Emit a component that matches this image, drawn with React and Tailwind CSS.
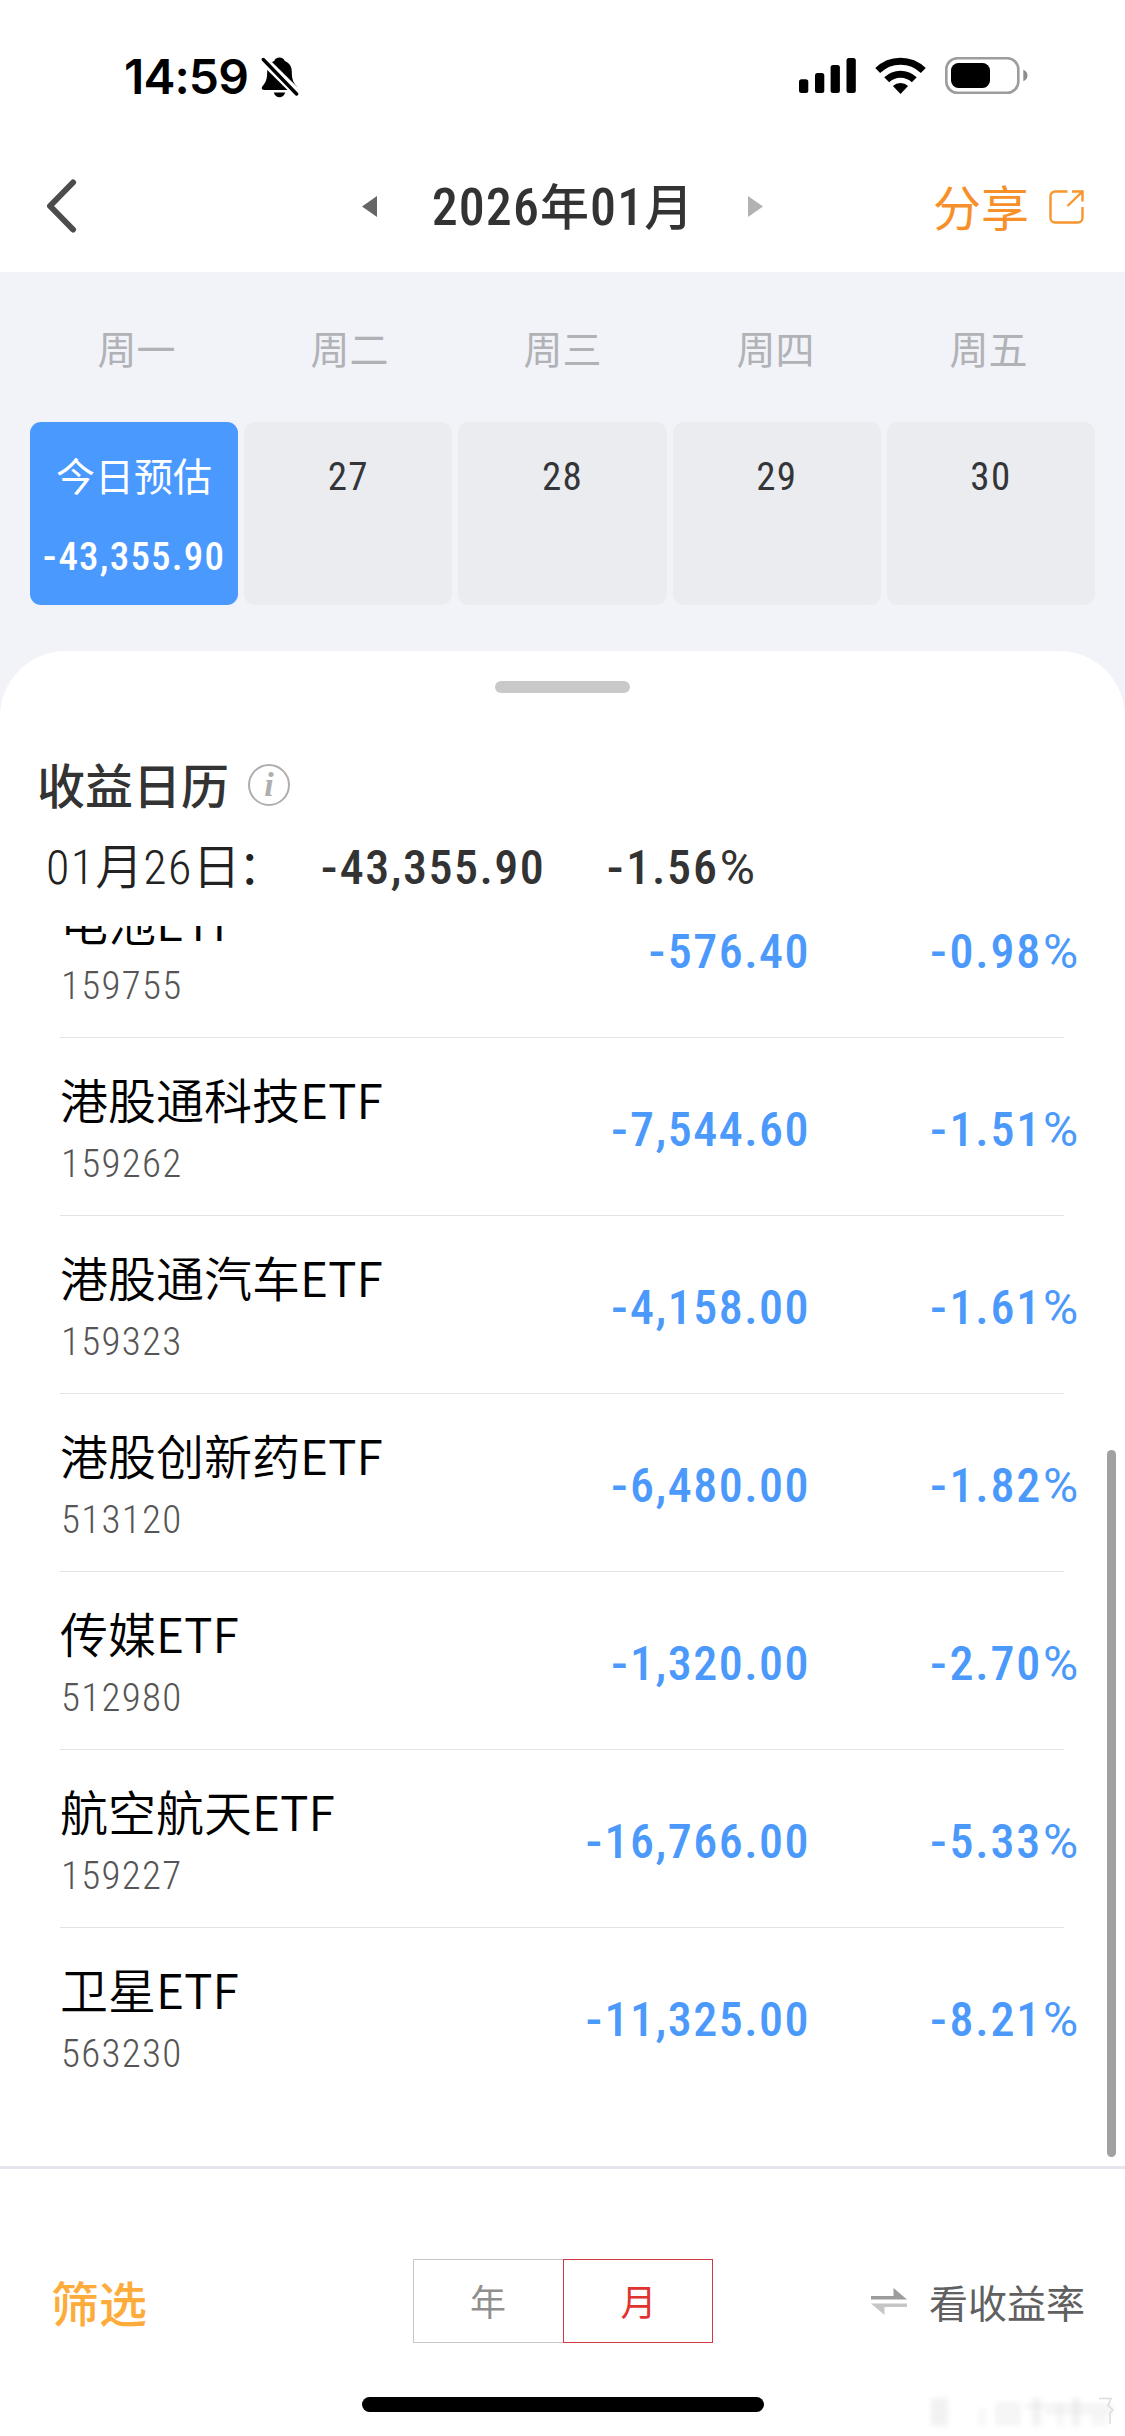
const weekdays = ["周一", "周二", "周三", "周四", "周五"];
const days = ["27", "28", "29", "30"];

const holdings = [
  { name: "电池ETF", code: "159755", amount: "-576.40", rate: "-0.98%" },
  { name: "港股通科技ETF", code: "159262", amount: "-7,544.60", rate: "-1.51%" },
  { name: "港股通汽车ETF", code: "159323", amount: "-4,158.00", rate: "-1.61%" },
  { name: "港股创新药ETF", code: "513120", amount: "-6,480.00", rate: "-1.82%" },
  { name: "传媒ETF", code: "512980", amount: "-1,320.00", rate: "-2.70%" },
  { name: "航空航天ETF", code: "159227", amount: "-16,766.00", rate: "-5.33%" },
  { name: "卫星ETF", code: "563230", amount: "-11,325.00", rate: "-8.21%" },
];

function BellOffIcon() {
  return (
    <svg className="h-[42px] w-[38px]" viewBox="0 0 38 42">
      <path
        d="M18.5 1.5c2.6 0 4.6 1.4 5.3 3.4 4.400 1.700 7 5.400 7 10.600 0 7.500 1.300 10.700 4.400 14.200 1.900 2.200 1.100 4.300-1.300 4.300H3.200c-2.500 0-3.300-2.200-1.400-4.300C4.900 26.200 6.200 23 6.200 15.500c0-5.200 2.600-8.900 7-10.600.7-2 2.700-3.400 5.300-3.400z"
        fill="#000"
      />
      <path d="M12.800 36.500h11.400c-.8 3-3 4.700-5.700 4.700s-4.900-1.700-5.700-4.700z" fill="#000" />
      <path d="M1 2.500L37 38" stroke="#fff" strokeWidth="9" />
      <path d="M2.300 3.500L35.600 38" stroke="#000" strokeWidth="3.400" strokeLinecap="round" />
    </svg>
  );
}

function SignalIcon() {
  return (
    <svg className="h-[35px] w-[57px]" viewBox="0 0 57 35">
      <rect x="0" y="21.300" width="9.300" height="13.700" rx="2.500" />
      <rect x="16" y="15" width="9.300" height="20" rx="2.500" />
      <rect x="31.600" y="7" width="9.300" height="28" rx="2.500" />
      <rect x="47.500" y="0" width="9.300" height="35" rx="2.500" />
    </svg>
  );
}

function WifiIcon() {
  return (
    <svg className="h-[37px] w-[51px]" viewBox="0 0 51 37">
      <g fill="none" stroke="#000" strokeWidth="7">
        <path d="M2.700 13.600a32.500 32.500 0 0 1 45.600 0" />
        <path d="M11.700 22.800a19.700 19.700 0 0 1 27.600 0" />
      </g>
      <path d="M25.500 37l-7.600-7.900a11 11 0 0 1 15.200 0z" />
    </svg>
  );
}

function BatteryIcon() {
  return (
    <svg className="h-[37px] w-[83px]" viewBox="0 0 83 37">
      <rect x="1.300" y="1.300" width="72" height="34.400" rx="11" fill="none" stroke="#9d9d9d" strokeWidth="2.600" />
      <rect x="6" y="6" width="39" height="25" rx="7.500" />
      <path d="M78.300 12.800c2.600.9 4.200 3 4.200 5.700s-1.600 4.800-4.200 5.700z" fill="#8d8d8d" />
    </svg>
  );
}

function ShareIcon() {
  return (
    <svg className="h-[34px] w-[35px]" viewBox="0 0 35 34" fill="none" stroke="#f7952f" strokeWidth="2.400">
      <path d="M18.500 1.500H6a4.500 4.500 0 0 0-4.500 4.500v22a4.500 4.500 0 0 0 4.500 4.500h23a4.500 4.500 0 0 0 4.500-4.500V17" />
      <path d="M23 1.500h10.500V11.500M33 2L18.500 16" />
    </svg>
  );
}

function InfoIcon() {
  return (
    <span className="flex size-[42px] items-center justify-center rounded-full border-[2.500px] border-[#aeaeae] pb-[1px] font-['Liberation_Serif',serif] text-[34px] leading-none font-bold text-[#aeaeae] italic">
      i
    </span>
  );
}

function SwapIcon() {
  return (
    <svg className="h-[27px] w-[36px]" viewBox="0 0 36 27">
      <path d="M0 8h22.500V0L36 11.500H0z" fill="#9c9c9c" />
      <path d="M36 19H13.500v8L0 15.500h36z" fill="#c6c6c6" />
    </svg>
  );
}

/* Signed figure: a wide minus, evenly tracked digits and a full-width percent sign. */
function Figure({ value }) {
  const percent = value.endsWith("%");
  const digits = value.slice(1, percent ? -1 : undefined);
  return (
    <span className="font-medium whitespace-nowrap">
      <span className="mr-[1px] [font-stretch:100%]">-</span>
      {digits}
      {percent && <span className="ml-[1px] font-normal [font-stretch:100%]">%</span>}
    </span>
  );
}

function StatusBar() {
  return (
    <div className="flex h-[144px] items-center justify-between bg-white pt-[9px] pr-[97px] pl-[124px]">
      <div className="flex items-center gap-[13px]">
        <span className="font-['Inter',sans-serif] text-[48px] leading-[60px] font-semibold tracking-[-0.900px] text-black">14:59</span>
        <BellOffIcon />
      </div>
      <div className="-mt-[3px] flex items-center">
        <SignalIcon />
        <span className="ml-[19px] flex"><WifiIcon /></span>
        <span className="ml-[19px] flex"><BatteryIcon /></span>
      </div>
    </div>
  );
}

function NavBar() {
  return (
    <div className="grid h-[128px] grid-cols-[362px_15px_371px_15px_362px] items-center bg-white">
      <svg className="-mt-[4px] ml-[46px] h-[54px] w-[31px]" viewBox="0 0 31 54" fill="none">
        <path d="M27 3.500L4 27l23 23.500" stroke="#4c4c4c" strokeWidth="6" strokeLinecap="round" strokeLinejoin="round" />
      </svg>
      <svg className="-mt-[4px] h-[21px] w-[15px]" viewBox="0 0 15 21"><path d="M15 0v21L0 10.500z" fill="#666" /></svg>
      <h1 className="text-center text-[52px] leading-[60px] font-medium text-[#333]">
        <span className="tracking-[1.100px]">2026</span>
        <span className="text-[49px]">年</span>
        <span className="ml-[1px] tracking-[1.100px]">01</span>
        <span className="text-[49px]">月</span>
      </h1>
      <svg className="-mt-[4px] h-[21px] w-[15px]" viewBox="0 0 15 21"><path d="M0 0v21l15-10.500z" fill="#b2b2b2" /></svg>
      <div className="flex items-center justify-end pr-[41px]">
        <span className="mt-[4px] text-[48px] leading-[60px] text-[#f7902a]">分享</span>
        <span className="-mt-[3px] ml-[20px] flex"><ShareIcon /></span>
      </div>
    </div>
  );
}

function Calendar() {
  return (
    <div className="mx-[30px] h-[379px]">
      <div className="grid h-[150px] grid-cols-5 items-center pt-[8px] text-center text-[39px] leading-[54px] text-[#b0b2b6]">
        {weekdays.map((d) => (
          <span key={d}>{d}</span>
        ))}
      </div>
      <div className="grid h-[183px] grid-cols-5 gap-[6px] text-center text-[39px] leading-[54px]">
        <div className="rounded-[11px] bg-[#4a99ff] pt-[29px] text-white">
          <div>今日预估</div>
          <div className="mt-[25px] tracking-[1.200px]">
            <Figure value="-43,355.90" />
          </div>
        </div>
        {days.map((d) => (
          <div key={d} className="rounded-[11px] bg-[#ebecef] pt-[28px] tracking-[1.300px] text-[#333538]">{d}</div>
        ))}
      </div>
    </div>
  );
}

function HoldingRow({ name, code, amount, rate }) {
  return (
    <div className="ml-[60px] grid h-[178px] w-[1004px] grid-cols-[388px_362px_270px] border-b border-[#e4e4e4] last:border-transparent">
      <div className="pt-[30px]">
        <div className="font-['Noto_Sans_CJK_SC',sans-serif] text-[48px] leading-[60px] font-[350] whitespace-nowrap text-black">{name}</div>
        <div className="mt-[11px] ml-[1px] text-[39px] leading-[50px] font-light tracking-[1.300px] text-[#555]">{code}</div>
      </div>
      <div className="self-center justify-self-end pt-[6px] text-[48px] leading-[60px] tracking-[1.500px] text-[#4c99fc]"><Figure value={amount} /></div>
      <div className="self-center justify-self-end pt-[6px] text-[48px] leading-[60px] tracking-[1.800px] text-[#4c99fc]"><Figure value={rate} /></div>
    </div>
  );
}

function ProfitSheet() {
  return (
    <section className="flex flex-1 flex-col rounded-t-[66px] bg-white pt-[30px]">
      <div className="mx-auto h-[12px] w-[135px] rounded-full bg-[#c9c9c9]" />
      <div className="mt-[65px] flex h-[60px] items-center pl-[37px]">
        <h2 className="text-[48px] leading-[60px] font-medium text-[#333]">收益日历</h2>
        <span className="-mt-[6px] ml-[19px]"><InfoIcon /></span>
      </div>
      <div className="mt-[20px] flex h-[60px] text-[48px] leading-[60px] text-[#333]">
        <div className="ml-[46px] w-[275px] font-[350] text-[#222]">
          <span className="tracking-[1.300px]">01</span>月
          <span className="tracking-[1.300px]">26</span>日<span className="-ml-[3px]">：</span>
        </div>
        <div className="w-[286px] tracking-[1.500px]"><Figure value="-43,355.90" /></div>
        <div className="tracking-[1.800px]"><Figure value="-1.56%" /></div>
      </div>
      <div className="relative mt-[28px] h-[1240px] overflow-hidden">
        <div className="-mt-[66px]">
          {holdings.map((h) => (
            <HoldingRow key={h.code} {...h} />
          ))}
        </div>
        <div className="absolute top-[524px] right-[9px] h-[707px] w-[9px] rounded-full bg-[#a1a1a1]" />
      </div>
      <Footer />
    </section>
  );
}

/* Faint smudged mark in the bottom right corner. */
function Smudge() {
  return (
    <svg className="absolute right-0 bottom-0 h-[66px] w-[210px]" viewBox="0 0 210 66">
      <defs>
        <filter id="soft" x="-20%" y="-20%" width="140%" height="140%">
          <feGaussianBlur stdDeviation="2.500" />
        </filter>
      </defs>
      <g filter="url(#soft)">
        <rect x="16" y="28" width="17" height="28" fill="#f2f2f2" />
        <rect x="63" y="38" width="8" height="18" fill="#f8f8f8" />
        <rect x="80" y="32" width="26" height="24" fill="#f6f6f6" />
        <rect x="117" y="28" width="9" height="28" fill="#f2f2f2" />
        <rect x="141" y="32" width="8" height="24" fill="#f7f7f7" />
        <rect x="157" y="28" width="8" height="28" fill="#f1f1f1" />
        <rect x="176" y="44" width="16" height="12" fill="#f7f7f7" />
        <path d="M110 36h88M130 42h68" stroke="#e4e4e4" strokeWidth="2" />
      </g>
      <path d="M184 28.500h12l-3 7 5 4.500-3 3v11" fill="none" stroke="#dcdcdc" strokeWidth="1.500" />
    </svg>
  );
}

function Footer() {
  return (
    <footer className="relative h-[270px] border-t-[3px] border-[#e5e5ee] bg-white pt-[90px]">
      <div className="grid h-[84px] grid-cols-[1fr_300px_1fr] items-center px-[40px]">
        <button className="mt-[10px] ml-[11px] justify-self-start text-[48px] leading-[60px] font-medium text-[#fdab3b]">筛选</button>
        <div className="grid h-[84px] grid-cols-2 text-center text-[36px] leading-[76px]">
          <div className="border border-r-0 border-[#c6c6c6] pt-[6px] text-[#8f8f8f]">年</div>
          <div className="border border-[#cf3a44] pt-[6px] pl-[2px] text-[#e0332f]">月</div>
        </div>
        <div className="flex items-center justify-self-end text-[39px] leading-[54px] text-[#606060]">
          <span className="mr-[22px] flex"><SwapIcon /></span>
          <span className="mt-[7px]">看收益率</span>
        </div>
      </div>
      <div className="mx-auto mt-[54px] h-[15px] w-[402px] rounded-full bg-black" />
      <Smudge />
    </footer>
  );
}

export default function App() {
  return (
    <main className="flex h-[2436px] w-[1125px] flex-col overflow-hidden bg-[#f2f3f9] font-['Roboto','Noto_Sans_CJK_SC',sans-serif] [font-stretch:75%]">
      <StatusBar />
      <NavBar />
      <Calendar />
      <ProfitSheet />
    </main>
  );
}
